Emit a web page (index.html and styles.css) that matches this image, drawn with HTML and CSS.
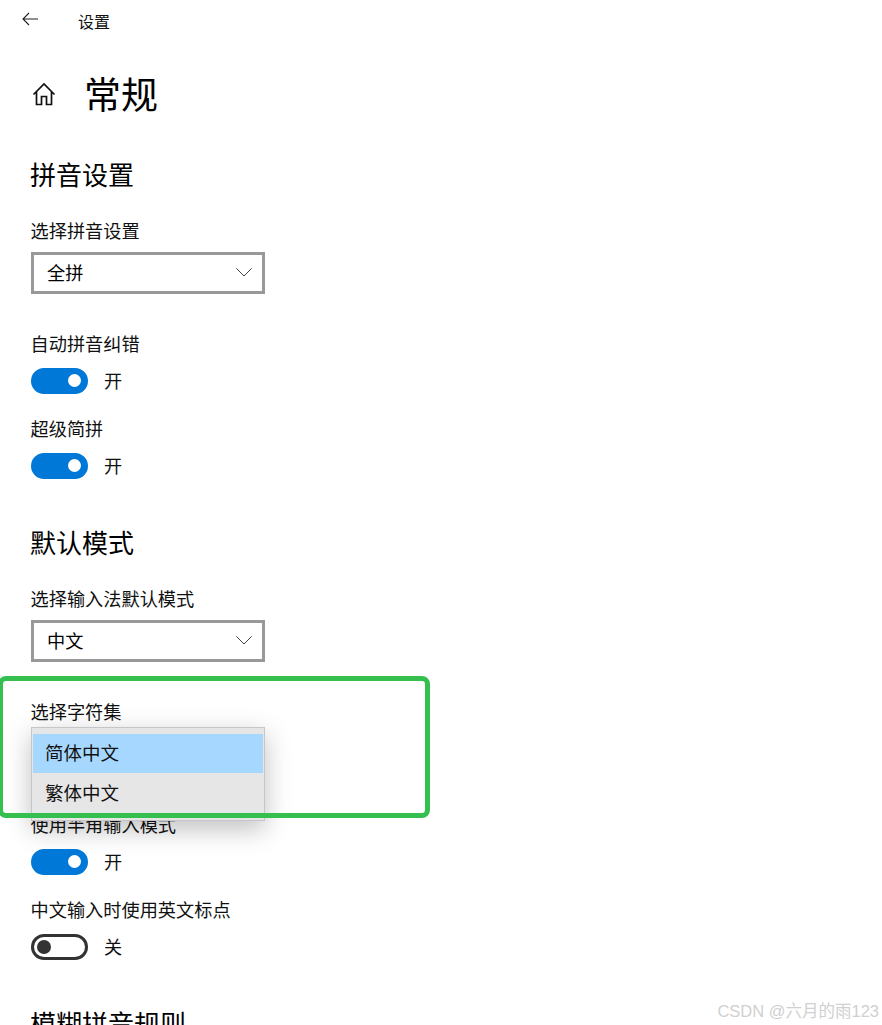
FILE: index.html
```html
<!DOCTYPE html>
<html lang="zh-CN">
<head>
    <meta charset="UTF-8">
    <title>设置</title>
    <link rel="stylesheet" href="styles.css">
</head>
<body>

<div class="page">
    <div class="topbar">
        <svg class="back-icon" viewBox="0 0 16 14" xmlns="http://www.w3.org/2000/svg">
            <path d="M7 1L1 7L7 13M1 7H16"></path>
        </svg>
        <span class="topbar-title">设置</span>
    </div>

    <div class="content">
        <div class="page-head">
            <svg class="home-icon" viewBox="0 0 24 24" xmlns="http://www.w3.org/2000/svg">
                <path d="M1.500 12.500L12 2L22.500 12.500M4.500 10V22.500H9.500V14.500H14.500V22.500H19.500V10"></path>
            </svg>
            <h1 class="page-title">常规</h1>
        </div>

        <!-- 拼音设置 -->
        <h2 class="section-title first">拼音设置</h2>
        <div class="field-label first">选择拼音设置</div>
        <div class="select">
            <span>全拼</span>
            <svg class="chevron" viewBox="0 0 16 9" xmlns="http://www.w3.org/2000/svg"><path d="M0.500 0.500L8 8L15.500 0.500"></path></svg>
        </div>
        <div class="field-label">自动拼音纠错</div>
        <div class="toggle-row">
            <span class="toggle on"></span><span class="toggle-text">开</span>
        </div>
        <div class="field-label tight">超级简拼</div>
        <div class="toggle-row">
            <span class="toggle on"></span><span class="toggle-text">开</span>
        </div>

        <!-- 默认模式 -->
        <h2 class="section-title">默认模式</h2>
        <div class="field-label first">选择输入法默认模式</div>
        <div class="select">
            <span>中文</span>
            <svg class="chevron" viewBox="0 0 16 9" xmlns="http://www.w3.org/2000/svg"><path d="M0.500 0.500L8 8L15.500 0.500"></path></svg>
        </div>
        <div class="field-label">选择字符集</div>
        <div class="select-open">
            <div class="popup">
                <div class="popup-item active">简体中文</div>
                <div class="popup-item">繁体中文</div>
            </div>
        </div>
        <div class="field-label">使用半角输入模式</div>
        <div class="toggle-row">
            <span class="toggle on"></span><span class="toggle-text">开</span>
        </div>
        <div class="field-label tight">中文输入时使用英文标点</div>
        <div class="toggle-row">
            <span class="toggle"></span><span class="toggle-text">关</span>
        </div>

        <!-- 模糊拼音规则 -->
        <h2 class="section-title">模糊拼音规则</h2>
    </div>

    <div class="highlight"></div>
    <div class="watermark">CSDN @六月的雨123</div>
</div>

</body>
</html>
```

FILE: styles.css
```css
/* 页面 */
html, body {
    margin: 0;
    padding: 0;
    background: #fff;
}
.page {
    position: relative;
    width: 882px;
    height: 1025px;
    overflow: hidden;
    color: #000;
    font-family: "Noto Sans CJK SC", "Liberation Sans", sans-serif;
}

/* 顶部标题栏 */
.topbar {
    display: flex;
    align-items: center;
    height: 40px;
    padding-left: 22px;
}
.back-icon {
    width: 16px;
    height: 14px;
    margin-top: -3px;
    fill: none;
    stroke: #222;
    stroke-width: 1.1;
}
.topbar-title {
    margin-left: 40px;
    margin-top: 1px;
    font-size: 16px;
    line-height: 24px;
    color: #111;
}

/* 内容 */
.content {
    padding-left: 31px;
}
.page-head {
    display: flex;
    align-items: center;
    height: 50px;
    margin-top: 30px;
}
.home-icon {
    width: 24px;
    height: 24px;
    margin-left: 1px;
    margin-top: -2px;
    fill: none;
    stroke: #111;
    stroke-width: 1.700;
}
.page-title {
    margin: 0 0 0 28px;
    padding-bottom: 4px;
    font-size: 37px;
    font-weight: 400;
    line-height: 46px;
}
.section-title {
    margin: 47px 0 0 -1px;
    padding-bottom: 4px;
    font-size: 26px;
    font-weight: 400;
    line-height: 32px;
}
.section-title.first {
    margin-top: 38px;
}
.field-label {
    margin: 38px 0 0 -0.500px;
    padding-bottom: 2px;
    font-size: 18.200px;
    line-height: 22px;
    color: #111;
}
.field-label.first {
    margin-top: 25px;
}
.field-label.tight {
    margin-top: 23px;
}

/* 下拉框 */
.select {
    display: flex;
    align-items: center;
    justify-content: space-between;
    box-sizing: border-box;
    width: 234px;
    height: 42px;
    margin-top: 9px;
    padding: 0 10px 0 13px;
    border: 3px solid #999;
    font-size: 18.200px;
}
.select span {
    padding-bottom: 3px;
}
.chevron {
    width: 16px;
    height: 9px;
    margin-top: -1px;
    fill: none;
    stroke: #444;
    stroke-width: 1;
}
.select-open {
    position: relative;
    width: 234px;
    height: 42px;
    margin-top: 9px;
}
.popup {
    position: absolute;
    top: -6px;
    left: 0;
    box-sizing: border-box;
    width: 234px;
    height: 94px;
    padding-top: 6px;
    border: 1px solid #c6c6c6;
    background: #e6e6e6;
    box-shadow: 0 8px 24px rgba(0, 0, 0, 0.25);
}
.popup-item {
    height: 41px;
    margin: 0 1px;
    padding-left: 12px;
    font-size: 18.500px;
    line-height: 38px;
    color: #111;
}
.popup-item.active {
    height: 39px;
    line-height: 36px;
    background: #a6d8ff;
}

/* 开关 */
.toggle-row {
    display: flex;
    align-items: center;
    height: 26px;
    margin-top: 12px;
}
.toggle {
    position: relative;
    box-sizing: border-box;
    width: 57px;
    height: 26px;
    border: 3px solid #333;
    border-radius: 13px;
    background: #fff;
}
.toggle::after {
    content: "";
    position: absolute;
    top: 3px;
    left: 3px;
    width: 14px;
    height: 14px;
    border-radius: 50%;
    background: #333;
}
.toggle.on {
    border-color: #0078d7;
    background: #0078d7;
}
.toggle.on::after {
    left: auto;
    right: 4px;
    width: 13px;
    height: 13px;
    background: #fff;
}
.toggle-text {
    margin-left: 16px;
    padding-bottom: 2px;
    font-size: 18.200px;
    color: #111;
}

/* 绿色标注框和水印 */
.highlight {
    position: absolute;
    top: 676px;
    left: -2px;
    box-sizing: border-box;
    width: 432px;
    height: 142px;
    border: 5px solid #34bf4f;
    border-radius: 8px;
}
.watermark {
    position: absolute;
    top: 999px;
    right: 3px;
    font-family: "Liberation Sans", "Noto Sans CJK SC", sans-serif;
    font-size: 16.500px;
    line-height: 24px;
    color: #d0d0d0;
}
```
